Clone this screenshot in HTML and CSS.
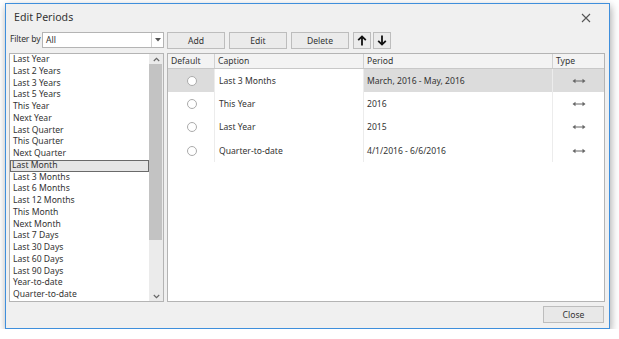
FILE: index.html
```html
<!DOCTYPE html>
<html>
<head>
<meta charset="utf-8">
<link rel="stylesheet" href="styles.css">
</head>
<body>
<div class="window">
  <div class="titlebar">
    <span class="title">Edit Periods</span>
    <svg class="xicon" width="10" height="10" viewBox="0 0 10 10"><path d="M1 1L9 9M9 1L1 9" stroke="#555" stroke-width="1.1"/></svg>
  </div>
  <div class="toolbar">
    <div class="filter">
      <span class="flabel">Filter by</span>
      <div class="combo">
        <span class="cval">All</span>
        <span class="cbtn"><svg width="6" height="4" viewBox="0 0 6 4"><path d="M0 0H6L3 3.5Z" fill="#555"/></svg></span>
      </div>
    </div>
    <div class="btns">
      <button class="btn wide">Add</button>
      <button class="btn wide">Edit</button>
      <button class="btn wide">Delete</button>
      <button class="btn sq"><svg width="10" height="11" viewBox="0 0 10 11"><path d="M5 10.5V2M1.2 5.2L5 1.4L8.8 5.2" stroke="#111" stroke-width="1.8" fill="none"/></svg></button>
      <button class="btn sq sq2"><svg width="10" height="11" viewBox="0 0 10 11"><path d="M5 0.5V9M1.2 5.8L5 9.6L8.8 5.8" stroke="#111" stroke-width="1.8" fill="none"/></svg></button>
    </div>
  </div>
  <div class="main">
    <div class="list">
      <div class="items">
        <div class="item">Last Year</div>
        <div class="item">Last 2 Years</div>
        <div class="item">Last 3 Years</div>
        <div class="item">Last 5 Years</div>
        <div class="item">This Year</div>
        <div class="item">Next Year</div>
        <div class="item">Last Quarter</div>
        <div class="item">This Quarter</div>
        <div class="item">Next Quarter</div>
        <div class="item sel">Last Month</div>
        <div class="item">Last 3 Months</div>
        <div class="item">Last 6 Months</div>
        <div class="item">Last 12 Months</div>
        <div class="item">This Month</div>
        <div class="item">Next Month</div>
        <div class="item">Last 7 Days</div>
        <div class="item">Last 30 Days</div>
        <div class="item">Last 60 Days</div>
        <div class="item">Last 90 Days</div>
        <div class="item">Year-to-date</div>
        <div class="item">Quarter-to-date</div>
        <div class="item">Month-to-date</div>
      </div>
      <div class="vscroll">
        <div class="sarrow"><svg width="7" height="5" viewBox="0 0 7 5"><path d="M0.8 4L3.5 1.3L6.2 4" stroke="#666" stroke-width="1.2" fill="none"/></svg></div>
        <div class="strack"><div class="sthumb"></div></div>
        <div class="sarrow"><svg width="7" height="5" viewBox="0 0 7 5"><path d="M0.8 1L3.5 3.7L6.2 1" stroke="#666" stroke-width="1.2" fill="none"/></svg></div>
      </div>
    </div>
    <div class="grid">
      <div class="row head">
        <div class="c c1">Default</div>
        <div class="c c2">Caption</div>
        <div class="c c3">Period</div>
        <div class="c c4">Type</div>
      </div>
      <div class="row data focus">
        <div class="c c1"><span class="radio"></span></div>
        <div class="c c2 cur">Last 3 Months</div>
        <div class="c c3">March, 2016 - May, 2016</div>
        <div class="c c4"><svg width="14" height="6" viewBox="0 0 14 6"><path d="M3 3H11" stroke="#666" stroke-width="1"/><path d="M0.5 3L3.5 0.8V5.2ZM13.5 3L10.5 0.8V5.2Z" fill="#666"/></svg></div>
      </div>
      <div class="row data">
        <div class="c c1"><span class="radio"></span></div>
        <div class="c c2">This Year</div>
        <div class="c c3">2016</div>
        <div class="c c4"><svg width="14" height="6" viewBox="0 0 14 6"><path d="M3 3H11" stroke="#666" stroke-width="1"/><path d="M0.5 3L3.5 0.8V5.2ZM13.5 3L10.5 0.8V5.2Z" fill="#666"/></svg></div>
      </div>
      <div class="row data">
        <div class="c c1"><span class="radio"></span></div>
        <div class="c c2">Last Year</div>
        <div class="c c3">2015</div>
        <div class="c c4"><svg width="14" height="6" viewBox="0 0 14 6"><path d="M3 3H11" stroke="#666" stroke-width="1"/><path d="M0.5 3L3.5 0.8V5.2ZM13.5 3L10.5 0.8V5.2Z" fill="#666"/></svg></div>
      </div>
      <div class="row data">
        <div class="c c1"><span class="radio"></span></div>
        <div class="c c2">Quarter-to-date</div>
        <div class="c c3">4/1/2016 - 6/6/2016</div>
        <div class="c c4"><svg width="14" height="6" viewBox="0 0 14 6"><path d="M3 3H11" stroke="#666" stroke-width="1"/><path d="M0.5 3L3.5 0.8V5.2ZM13.5 3L10.5 0.8V5.2Z" fill="#666"/></svg></div>
      </div>
    </div>
  </div>
  <div class="footer">
    <button class="btn close">Close</button>
  </div>
</div>
</body>
</html>
```
FILE: styles.css
```css
* { box-sizing: border-box; }
html, body { margin: 0; padding: 0; background: #fff; }
body {
  font-family: "Noto Sans", "Open Sans", sans-serif;
  font-size: 8.6px;
  color: #333;
}
.window {
  margin: 3px 0 0 5px;
  width: 605px;
  height: 326px;
  border: 1px solid #3f8fdc;
  background: #f0f0f0;
  box-shadow: 1px 3px 8px rgba(0,0,0,0.35);
  display: flex;
  flex-direction: column;
  padding: 0 4px 0 3px;
}
.titlebar {
  height: 28px;
  display: flex;
  align-items: center;
  justify-content: space-between;
  padding: 0 14px 2px 5px;
}
.title {
  font-size: 10.6px;
  color: #333;
}
.xicon { margin-top: 2px; }
.toolbar {
  height: 17px;
  display: flex;
  gap: 3px;
}
.filter {
  width: 155px;
  display: flex;
  align-items: flex-start;
}
.flabel {
  width: 33px;
  line-height: 15px;
  padding-left: 1px;
  white-space: nowrap;
  letter-spacing: -0.2px;
}
.combo {
  flex: 1;
  height: 16px;
  background: #fff;
  border: 1px solid #b4b4b4;
  display: flex;
}
.cval {
  flex: 1;
  padding-left: 3px;
  line-height: 14px;
}
.cbtn {
  width: 12px;
  border-left: 1px solid #d0d0d0;
  display: flex;
  align-items: center;
  justify-content: center;
}
.btns {
  display: flex;
  gap: 4px;
}
.btn {
  font-family: inherit;
  font-size: 8.6px;
  color: #333;
  background: #ebebeb;
  border: 1px solid #bdbdbd;
  padding: 0;
  margin: 0;
  height: 17px;
  display: flex;
  align-items: center;
  justify-content: center;
}
.btn.wide { width: 58px; }
.btn.sq { width: 18px; }
.btn.sq2 { margin-left: -2px; }
.main {
  margin-top: 4px;
  height: 249px;
  display: flex;
  gap: 3px;
}
.list {
  width: 155px;
  background: #fff;
  border: 1px solid #b4b4b4;
  display: flex;
  overflow: hidden;
}
.items {
  flex: 1;
  overflow: hidden;
}
.item {
  height: 11.75px;
  line-height: 11.75px;
  padding-left: 2px;
  white-space: nowrap;
  border: 1px solid transparent;
  border-width: 0 1px;
}
.item.sel {
  background: #e6e6e6;
  border: 1px solid #6a6a6a;
  line-height: 9.75px;
  padding-left: 1px;
}
.vscroll {
  width: 14px;
  background: #ebebeb;
  display: flex;
  flex-direction: column;
}
.sarrow {
  height: 10px;
  display: flex;
  align-items: center;
  justify-content: center;
}
.strack {
  flex: 1;
}
.sthumb {
  margin: 0 1px 0 0;
  height: 176px;
  background: #c3c3c3;
}
.grid {
  flex: 1;
  background: #fff;
  border: 1px solid #b4b4b4;
}
.row { display: flex; }
.head {
  height: 15px;
  background: #f3f3f3;
  border-bottom: 1px solid #c8c8c8;
}
.head .c {
  line-height: 14px;
  padding-left: 3px;
  border-right: 1px solid #d2d2d2;
}
.head .c4 { border-right: 0; }
.c1 { width: 47px; }
.c2 { width: 149px; }
.c3 { width: 189px; }
.c4 { width: 51px; }
.data { height: 23.33px; }
.data .c {
  display: flex;
  align-items: center;
  padding-left: 4px;
  border-right: 1px solid #ececec;
}
.data .c3 { padding-left: 3px; }
.data .c1 { justify-content: center; padding-left: 1px; }
.data .c4 { justify-content: center; padding: 0; border-right: 0; }
.focus { background: #dcdcdc; }
.focus .cur { background: #fff; }
.radio {
  width: 10px;
  height: 10px;
  border-radius: 50%;
  border: 1px solid #ababab;
  background: #fff;
}
.footer {
  flex: 1;
  display: flex;
  justify-content: flex-end;
  align-items: flex-start;
  padding-top: 4px;
  padding-right: 1px;
}
.btn.close {
  width: 61px;
  height: 17px;
  background: #e8e8e8;
}
```
